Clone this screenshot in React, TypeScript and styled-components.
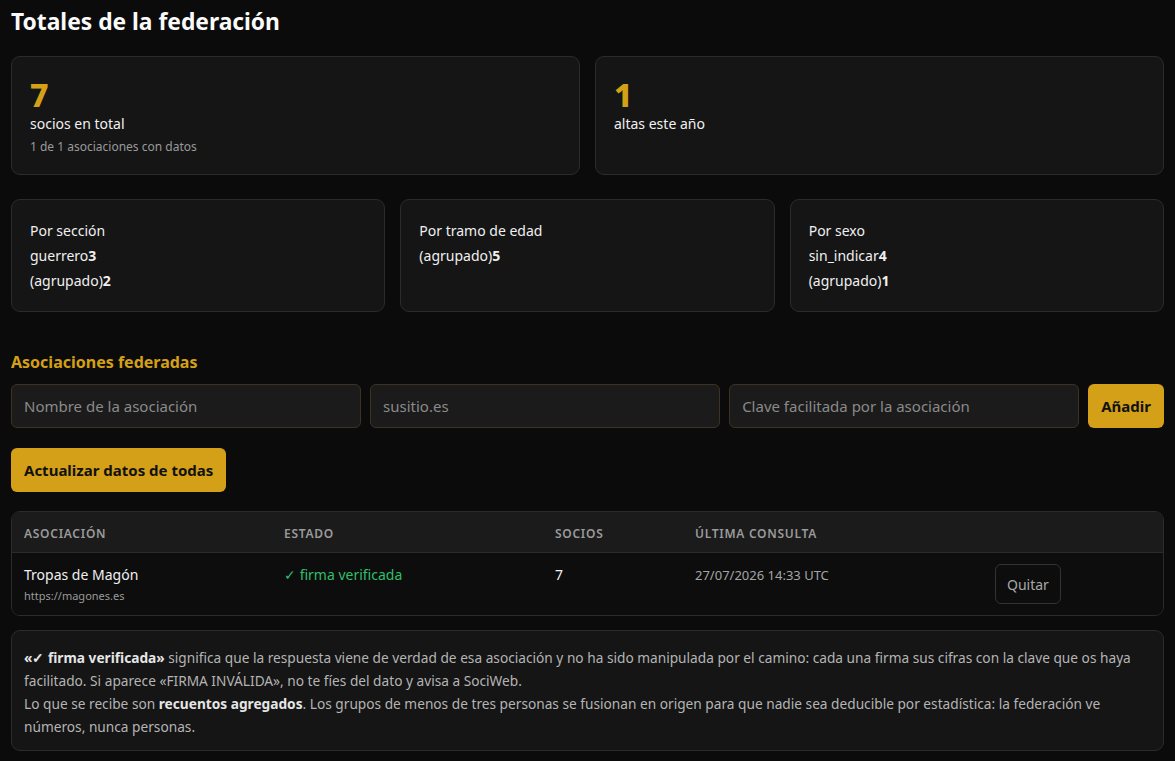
import styled, { createGlobalStyle } from "styled-components";

const GlobalStyle = createGlobalStyle`
    html, body {
        margin: 0;
        background: #0b0b0b;
        color: #f0f0f0;
        font-family: "Noto Sans", "Open Sans", sans-serif;
    }
    * { box-sizing: border-box; }
`;

interface Breakdown {
    title: string;
    rows: [string, number][];
}

const breakdowns: Breakdown[] = [
    { title: "Por sección", rows: [["guerrero", 3], ["(agrupado)", 2]] },
    { title: "Por tramo de edad", rows: [["(agrupado)", 5]] },
    { title: "Por sexo", rows: [["sin_indicar", 4], ["(agrupado)", 1]] },
];

export default function App() {
    return (
        <Page>
            <GlobalStyle />
            <Title>Totales de la federación</Title>

            <StatGrid>
                <StatCard>
                    <BigNumber>7</BigNumber>
                    <StatLabel>socios en total</StatLabel>
                    <StatHint>1 de 1 asociaciones con datos</StatHint>
                </StatCard>
                <StatCard>
                    <BigNumber>1</BigNumber>
                    <StatLabel>altas este año</StatLabel>
                </StatCard>
            </StatGrid>

            <BreakdownGrid>
                {breakdowns.map((b) => (
                    <BreakdownCard key={b.title}>
                        <BreakdownLine>{b.title}</BreakdownLine>
                        {b.rows.map(([label, n]) => (
                            <BreakdownLine key={label}>
                                {label}<b>{n}</b>
                            </BreakdownLine>
                        ))}
                    </BreakdownCard>
                ))}
            </BreakdownGrid>

            <SectionTitle>Asociaciones federadas</SectionTitle>
            <AddRow>
                <Field placeholder="Nombre de la asociación" />
                <Field placeholder="susitio.es" />
                <Field placeholder="Clave facilitada por la asociación" />
                <GoldButton>Añadir</GoldButton>
            </AddRow>

            <RefreshRow>
                <GoldButton>Actualizar datos de todas</GoldButton>
            </RefreshRow>

            <Table>
                <HeadRow>
                    <HeadCell>Asociación</HeadCell>
                    <HeadCell>Estado</HeadCell>
                    <HeadCell>Socios</HeadCell>
                    <HeadCell>Última consulta</HeadCell>
                    <HeadCell />
                </HeadRow>
                <BodyRow>
                    <Cell>
                        <AssocName>Tropas de Magón</AssocName>
                        <AssocUrl>https://magones.es</AssocUrl>
                    </Cell>
                    <Cell><Verified>✓ firma verificada</Verified></Cell>
                    <Cell>7</Cell>
                    <Cell><Muted>27/07/2026 14:33 UTC</Muted></Cell>
                    <Cell><GhostButton>Quitar</GhostButton></Cell>
                </BodyRow>
            </Table>

            <Note>
                <p>
                    <strong>«✓ firma verificada»</strong> significa que la respuesta viene de verdad de esa asociación y no ha sido manipulada por el camino: cada una firma sus cifras con la clave que os haya facilitado. Si aparece «FIRMA INVÁLIDA», no te fíes del dato y avisa a SociWeb.
                </p>
                <p>
                    Lo que se recibe son <strong>recuentos agregados</strong>. Los grupos de menos de tres personas se fusionan en origen para que nadie sea deducible por estadística: la federación ve números, nunca personas.
                </p>
            </Note>
        </Page>
    );
}

const gold = "#d4a017";

const Page = styled.div`
    padding: 6px 11px 10px;
`;

const Title = styled.h1`
    margin: 0 0 18px;
    font-size: 22.8px;
    font-weight: 700;
    line-height: 32px;
    color: #fafafa;
`;

const StatGrid = styled.div`
    display: grid;
    grid-template-columns: 1fr 1fr;
    gap: 15px;
    margin-bottom: 24px;
`;

const Card = styled.div`
    background: #151515;
    border: 1px solid #2b2b2b;
    border-radius: 9px;
`;

const StatCard = styled(Card)`
    height: 119px;
    padding: 20px 18px;
`;

const BigNumber = styled.div`
    font-size: 32px;
    font-weight: 800;
    line-height: 36px;
    color: ${gold};
`;

const StatLabel = styled.div`
    font-size: 14px;
    line-height: 22px;
    color: #f0f0f0;
`;

const StatHint = styled.div`
    font-size: 12px;
    line-height: 23px;
    color: #9a9a9a;
`;

const BreakdownGrid = styled.div`
    display: grid;
    grid-template-columns: repeat(3, 1fr);
    gap: 15px;
    margin-bottom: 38px;
`;

const BreakdownCard = styled(Card)`
    height: 113px;
    padding: 18px 18px;
`;

const BreakdownLine = styled.div`
    font-size: 14px;
    line-height: 25px;
    color: #f0f0f0;

    b { font-weight: 700; }
`;

const SectionTitle = styled.h2`
    margin: 0 0 10px;
    font-size: 16px;
    font-weight: 700;
    line-height: 24px;
    color: ${gold};
`;

const AddRow = styled.div`
    display: flex;
    gap: 9px;
    margin-bottom: 20px;
`;

const Field = styled.input`
    flex: 1;
    min-width: 0;
    height: 44px;
    padding: 0 12px;
    background: #1b1b1b;
    border: 1px solid #3d3323;
    border-radius: 6px;
    color: #e0e0e0;
    font-family: inherit;
    font-size: 15px;

    &::placeholder { color: #8a8a8a; }
`;

const GoldButton = styled.button`
    height: 44px;
    padding: 0 13px;
    background: ${gold};
    border: none;
    border-radius: 6px;
    color: #111;
    font-family: inherit;
    font-size: 15px;
    font-weight: 700;
    cursor: pointer;
`;

const RefreshRow = styled.div`
    display: flex;
    margin-bottom: 19px;
`;

const Table = styled.div`
    border: 1px solid #2b2b2b;
    border-radius: 9px;
    overflow: hidden;
    margin-bottom: 14px;
`;

const columns = "260px 271px 140px 300px 1fr";

const HeadRow = styled.div`
    display: grid;
    grid-template-columns: ${columns};
    height: 41px;
    padding-top: 2px;
    align-items: center;
    background: #1b1b1b;
    border-bottom: 1px solid #2b2b2b;
`;

const HeadCell = styled.div`
    padding: 0 12px;
    font-size: 12px;
    font-weight: 600;
    letter-spacing: 0.06em;
    text-transform: uppercase;
    color: #9a9a9a;
`;

const BodyRow = styled.div`
    display: grid;
    grid-template-columns: ${columns};
    padding: 11px 0 9px;
    background: #0d0d0d;
    font-size: 14px;
    color: #f0f0f0;
`;

const Cell = styled.div`
    padding: 0 12px;
    line-height: 22px;
`;

const AssocName = styled.div`
    font-size: 14px;
`;

const AssocUrl = styled.div`
    font-size: 11px;
    line-height: 20px;
    color: #9a9a9a;
`;

const Verified = styled.span`
    color: #2fbf6a;
`;

const Muted = styled.span`
    font-size: 13px;
    color: #a5a5a5;
`;

const GhostButton = styled.button`
    height: 40px;
    padding: 0 11px;
    background: transparent;
    border: 1px solid #333;
    border-radius: 6px;
    color: #a8a8a8;
    font-family: inherit;
    font-size: 14px;
    cursor: pointer;
`;

const Note = styled(Card)`
    padding: 15px 12px 12px;
    font-size: 13.7px;
    line-height: 23px;
    color: #b4b4b4;

    p { margin: 0; }
    strong { color: #e6e6e6; font-weight: 700; }
`;
